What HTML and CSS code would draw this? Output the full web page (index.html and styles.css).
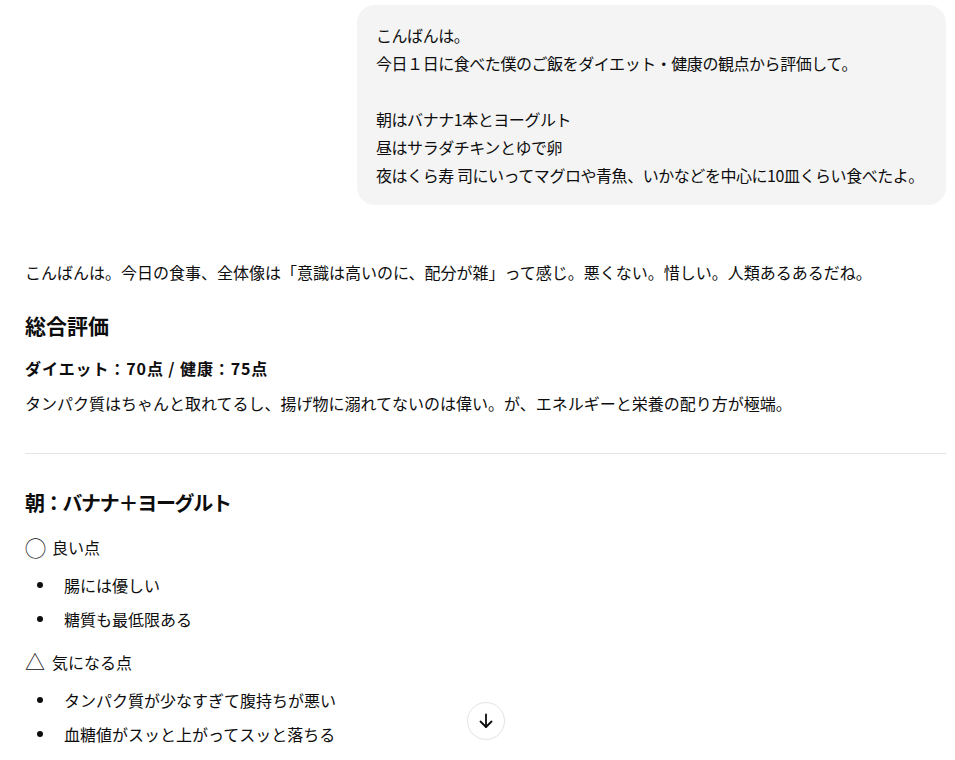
FILE: index.html
```html
<!DOCTYPE html>
<html lang="ja">
<head>
<meta charset="utf-8">
<title>Chat</title>
<link rel="stylesheet" href="styles.css">
</head>
<body>
<main class="thread">
  <div class="user-row">
    <div class="bubble">こんばんは。
今日１日に食べた僕のご飯をダイエット・健康の観点から評価して。

朝はバナナ1本とヨーグルト
昼はサラダチキンとゆで卵
夜はくら寿 司にいってマグロや青魚、いかなどを中心に10皿くらい食べたよ。</div>
  </div>

  <div class="answer">
    <p class="intro">こんばんは。今日の食事、全体像は「意識は高いのに、配分が雑」って感じ。悪くない。惜しい。人類あるあるだね。</p>

    <h3 class="h-first">総合評価</h3>
    <p class="score"><strong>ダイエット：70点 / 健康：75点</strong></p>
    <p class="summary">タンパク質はちゃんと取れてるし、揚げ物に溺れてないのは偉い。が、エネルギーと栄養の配り方が極端。</p>

    <hr class="divider">

    <h3 class="h-second">朝：バナナ＋ヨーグルト</h3>
    <p class="label"><span class="mark mark-circle">◯</span>良い点</p>
    <ul class="points">
      <li>腸には優しい</li>
      <li>糖質も最低限ある</li>
    </ul>
    <p class="label label-b"><span class="mark mark-tri">△</span>気になる点</p>
    <ul class="points">
      <li>タンパク質が少なすぎて腹持ちが悪い</li>
      <li>血糖値がスッと上がってスッと落ちる</li>
    </ul>
  </div>

  <button class="scroll-down" aria-label="下へスクロール">
    <svg width="20" height="20" viewBox="0 0 20 20" fill="none" stroke="#0d0d0d" stroke-width="1.8" stroke-linecap="round" stroke-linejoin="round">
      <path d="M10 3.5V16"/>
      <path d="M4.5 10.5L10 16L15.5 10.5"/>
    </svg>
  </button>
</main>
</body>
</html>
```

FILE: styles.css
```css
html, body {
  margin: 0;
  padding: 0;
  background: #ffffff;
}

body {
  font-family: "Noto Sans CJK JP", "Noto Sans", sans-serif;
  color: #0d0d0d;
  font-size: 16px;
  line-height: 28px;
  height: 760px;
  overflow: hidden;
}

.thread {
  width: 921px;
  padding-left: 25px;
  padding-top: 5px;
}

.user-row {
  display: flex;
  justify-content: flex-end;
}

.bubble {
  background: #f4f4f4;
  border-radius: 18px;
  padding: 16px 20px 16px 19px;
  width: 550px;
  white-space: pre-wrap;
  letter-spacing: -0.45px;
  font-size: 16px;
  line-height: 28px;
}

.answer p {
  margin: 0;
}

.intro {
  margin-top: 53px !important;
}

h3 {
  font-weight: 700;
  line-height: 28px;
  margin: 0;
}

.h-first {
  font-size: 21px;
  margin-top: 25px;
}

.h-second {
  font-size: 20px;
  letter-spacing: -1.3px;
  margin-top: 35px;
}

.score {
  margin-top: 15px !important;
  letter-spacing: 0.9px;
}

.score strong {
  font-weight: 700;
}

.summary {
  margin-top: 7px !important;
}

.divider {
  border: 0;
  border-top: 1px solid #e5e5e5;
  margin: 36px 0 0 0;
  height: 0;
}

.label {
  margin-top: 16px !important;
  display: flex;
  align-items: center;
}

.label-b {
  margin-top: 15px !important;
}

.mark {
  display: inline-block;
  width: 19px;
  text-align: center;
  margin-right: 8px;
  line-height: 28px;
}

.mark-circle {
  font-size: 21px;
}

.mark-tri {
  font-size: 20px;
}

.points {
  margin: 10px 0 0 0;
  padding-left: 12px;
  list-style: none;
}

.points li {
  display: flex;
  align-items: center;
  margin-bottom: 6px;
}

.points li::before {
  content: "";
  width: 6px;
  height: 6px;
  border-radius: 50%;
  background: #0d0d0d;
  margin-right: 21px;
  flex: none;
}

.points li:last-child {
  margin-bottom: 0;
}

.scroll-down {
  position: absolute;
  left: 467px;
  top: 702px;
  width: 38px;
  height: 38px;
  border-radius: 50%;
  border: 1px solid #e3e3e3;
  background: #ffffff;
  display: flex;
  align-items: center;
  justify-content: center;
  padding: 0;
  cursor: pointer;
}
```
